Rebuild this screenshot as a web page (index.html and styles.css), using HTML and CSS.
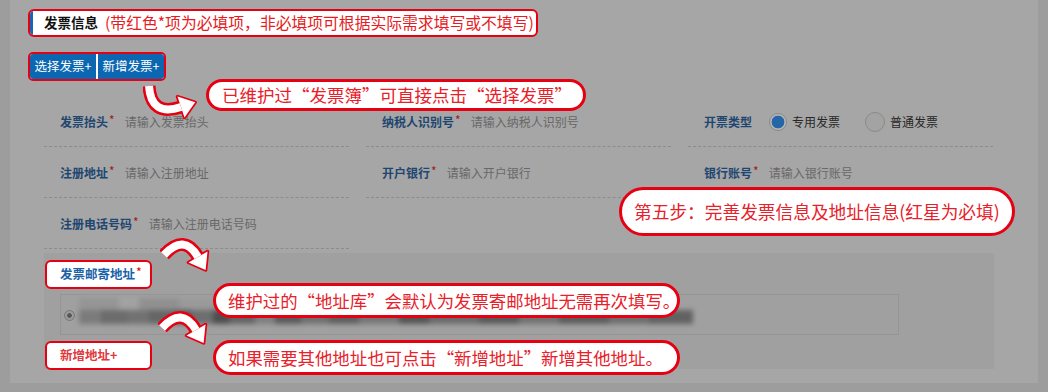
FILE: index.html
```html
<!DOCTYPE html>
<html lang="zh-CN">
<head>
    <meta charset="UTF-8">
    <meta name="viewport" content="width=device-width, initial-scale=1.0">
    <title>发票信息</title>
    <link rel="stylesheet" href="styles.css">
</head>
<body>
    <div class="page">
        <div class="title-box">
            <span class="title-bar"></span>
            <span class="title">发票信息</span>
            <span class="title-note">(带红色*项为必填项，非必填项可根据实际需求填写或不填写)</span>
        </div>

        <div class="btn-group">
            <button class="btn">选择发票+</button>
            <button class="btn">新增发票+</button>
        </div>

        <div class="form-grid">
            <div class="field">
                <span class="label">发票抬头<i>*</i></span>
                <span class="ph">请输入发票抬头</span>
            </div>
            <div class="field">
                <span class="label">纳税人识别号<i>*</i></span>
                <span class="ph">请输入纳税人识别号</span>
            </div>
            <div class="field">
                <span class="label">开票类型</span>
                <span class="radio checked"></span><span class="radio-text">专用发票</span>
                <span class="radio"></span><span class="radio-text">普通发票</span>
            </div>

            <div class="field">
                <span class="label">注册地址<i>*</i></span>
                <span class="ph">请输入注册地址</span>
            </div>
            <div class="field">
                <span class="label">开户银行<i>*</i></span>
                <span class="ph">请输入开户银行</span>
            </div>
            <div class="field">
                <span class="label">银行账号<i>*</i></span>
                <span class="ph">请输入银行账号</span>
            </div>

            <div class="field">
                <span class="label">注册电话号码<i>*</i></span>
                <span class="ph">请输入注册电话号码</span>
            </div>
        </div>

        <div class="address">
            <div class="addr-label">发票邮寄地址<i>*</i></div>
            <div class="addr-box">
                <span class="addr-radio"></span>
                <span class="addr-text"></span>
            </div>
            <div class="addr-add">新增地址+</div>
        </div>

        <!-- annotations -->
        <div class="callout c1">已维护过“发票簿”可直接点击“选择发票”</div>
        <div class="callout c2">第五步：完善发票信息及地址信息(红星为必填)</div>
        <div class="callout c3">维护过的“地址库”会默认为发票寄邮地址无需再次填写。</div>
        <div class="callout c4">如果需要其他地址也可点击“新增地址”新增其他地址。</div>

        <svg class="arrow a1" width="60" height="40" viewBox="0 0 60 40">
            <path d="M6 3 Q8 34 38 24" fill="none" stroke="#e60012" stroke-width="13"/>
            <polygon points="52.2,19.3 41.5,34.4 34.5,13.6" fill="#e60012" stroke="#e60012" stroke-width="3.5" stroke-linejoin="round"/>
            <path d="M6 3 Q8 34 38 24" fill="none" stroke="#fff" stroke-width="8"/>
            <polygon points="52.2,19.3 41.5,34.4 34.5,13.6" fill="#fff"/>
        </svg>
        <svg class="arrow a2" width="54" height="38" viewBox="0 0 54 38">
            <path d="M4 18 Q24 -4 38 20" fill="none" stroke="#e60012" stroke-width="13"/>
            <polygon points="45.6,33 28.5,25.5 47.5,14.5" fill="#e60012" stroke="#e60012" stroke-width="3.5" stroke-linejoin="round"/>
            <path d="M4 18 Q24 -4 38 20" fill="none" stroke="#fff" stroke-width="8"/>
            <polygon points="45.6,33 28.5,25.5 47.5,14.5" fill="#fff"/>
        </svg>
        <svg class="arrow a3" width="54" height="38" viewBox="0 0 54 38">
            <path d="M4 18 Q24 -4 38 20" fill="none" stroke="#e60012" stroke-width="13"/>
            <polygon points="45.6,33 28.5,25.5 47.5,14.5" fill="#e60012" stroke="#e60012" stroke-width="3.5" stroke-linejoin="round"/>
            <path d="M4 18 Q24 -4 38 20" fill="none" stroke="#fff" stroke-width="8"/>
            <polygon points="45.6,33 28.5,25.5 47.5,14.5" fill="#fff"/>
        </svg>
    </div>
</body>
</html>
```

FILE: styles.css
```css
body {
    margin: 0;
    background-color: #9d9d9d;
    font-family: "Noto Sans CJK SC", "Microsoft YaHei", sans-serif;
}
.page {
    position: relative;
    margin-left: 10px;
    width: 1028px;
    height: 383px;
    padding-top: 9px;
    box-sizing: border-box;
    background-color: #a6a6a6;
}
.title-box {
    display: flex;
    align-items: center;
    margin-left: 18px;
    width: 510px;
    height: 28px;
    box-sizing: border-box;
    border: 2.5px solid #e60012;
    border-radius: 6px;
    background: white;
    overflow: hidden;
    white-space: nowrap;
}
.title-bar {
    flex-shrink: 0;
    width: 3px;
    height: 100%;
    background-color: #1766b5;
}
.title {
    flex-shrink: 0;
    margin-left: 11px;
    font-size: 13.5px;
    font-weight: bold;
    color: #111;
    line-height: 1;
}
.title-note {
    margin-left: 7px;
    font-size: 15.8px;
    color: #e51c23;
    line-height: 1;
}
.btn-group {
    display: flex;
    gap: 2px;
    margin-top: 15px;
    margin-left: 18px;
    width: 138px;
    height: 29px;
    box-sizing: border-box;
    border: 2.5px solid #e60012;
    border-radius: 5px;
    background: white;
    overflow: hidden;
}
.btn {
    flex: 1;
    padding: 0;
    border: none;
    background-color: #0b67b2;
    color: white;
    font-family: inherit;
    font-size: 12.5px;
    line-height: 1;
}
.form-grid {
    display: grid;
    grid-template-columns: repeat(3, 305px);
    column-gap: 17px;
    margin-top: 15px;
    margin-left: 34px;
}
.field {
    display: flex;
    align-items: center;
    height: 48px;
    padding-top: 2px;
    padding-left: 16px;
    border-bottom: 1px dashed #8c8c8c;
    font-size: 12px;
    line-height: 1;
}
.label {
    font-weight: bold;
    color: #1f4670;
}
.label i,
.addr-label i {
    font-style: normal;
    font-weight: normal;
    color: #a01a1a;
    margin-left: 1px;
    position: relative;
    top: -2px;
}
.ph {
    margin-left: 10px;
    color: #686868;
}
.radio {
    width: 16px;
    height: 16px;
    margin-left: 17px;
    border: 1.5px solid #8a8a8a;
    border-radius: 50%;
    background-color: #a3a3a3;
}
.radio.checked {
    background: radial-gradient(circle, #2566a8 0 6px, #b4b4b4 6.7px);
}
.radio + .radio-text + .radio {
    margin-left: 25px;
    width: 18px;
    height: 18px;
}
.radio-text {
    margin-left: 5px;
    color: #262626;
}
.address {
    margin-top: 4px;
    margin-left: 34px;
    width: 950px;
    height: 116px;
    padding-top: 7px;
    box-sizing: border-box;
    background-color: #a0a0a0;
}
.addr-label,
.addr-add {
    display: flex;
    align-items: center;
    margin-left: 1px;
    width: 107px;
    height: 29px;
    padding-left: 13px;
    box-sizing: border-box;
    border: 2.5px solid #e60012;
    border-radius: 6px;
    background: white;
    font-size: 12.5px;
    font-weight: bold;
    line-height: 1;
}
.addr-label {
    color: #1a62a8;
}
.addr-label i {
    color: #e60012;
}
.addr-add {
    margin-top: 6px;
    color: #e0383c;
}
.addr-box {
    display: flex;
    align-items: center;
    margin-top: 5px;
    margin-left: 16px;
    width: 839px;
    height: 41px;
    box-sizing: border-box;
    border: 1px solid #959595;
    padding-left: 3px;
}
.addr-radio {
    width: 9px;
    height: 9px;
    border: 1.5px solid #777;
    border-radius: 50%;
    background: radial-gradient(circle, #555 0 2px, #9a9a9a 2.5px);
    margin-top: 2px;
}
.addr-text {
    position: relative;
    width: 614px;
    height: 14px;
    margin-left: 4px;
    margin-top: 4px;
    filter: blur(2.5px);
    background: linear-gradient(90deg,
        #7b7b7b 0 22px, #6c6c6c 22px 48px, #727272 48px 70px, #666 70px 96px,
        #575757 96px 112px, #6e6e6e 112px 134px, #4e4e4e 134px 150px, #646464 150px 176px,
        #7f7f7f 176px 196px, #5a5a5a 196px 222px, #707070 222px 250px, #5f5f5f 250px 280px,
        #767676 280px 320px, #555 320px 350px, #6a6a6a 350px 400px, #595959 400px 440px,
        #727272 440px 480px, #5c5c5c 480px 530px, #6e6e6e 530px 570px, #626262 570px 614px);
}
.addr-text::before {
    content: "";
    position: absolute;
    left: 0;
    right: 40px;
    top: -12px;
    height: 12px;
    background: linear-gradient(90deg,
        #959595 0 40px, #a2a2a2 40px 60px, #909090 60px 100px, #9a9a9a 100px 140px,
        #8b8b8b 140px 190px, #989898 190px 260px, #8f8f8f 260px 330px, #999 330px 574px);
}
.callout {
    position: absolute;
    display: flex;
    align-items: center;
    box-sizing: border-box;
    border: 3px solid #e60012;
    border-radius: 20px;
    background: white;
    color: #e8202a;
    font-size: 17.4px;
    line-height: 1;
    white-space: nowrap;
}
.c1 {
    left: 196px;
    top: 79px;
    width: 380px;
    height: 32px;
    padding-left: 13px;
    font-size: 17.5px;
}
.c2 {
    left: 609px;
    top: 187px;
    width: 396px;
    height: 49px;
    padding-left: 12px;
    border-radius: 25px;
    font-size: 17.7px;
}
.c3 {
    left: 203px;
    top: 283px;
    width: 467px;
    height: 35px;
    padding-left: 12px;
}
.c4 {
    left: 203px;
    top: 340px;
    width: 467px;
    height: 35px;
    padding-left: 12px;
}
.arrow {
    position: absolute;
}
.a1 {
    left: 133px;
    top: 83px;
}
.a2 {
    left: 150px;
    top: 237px;
}
.a3 {
    left: 148px;
    top: 310px;
}
```
